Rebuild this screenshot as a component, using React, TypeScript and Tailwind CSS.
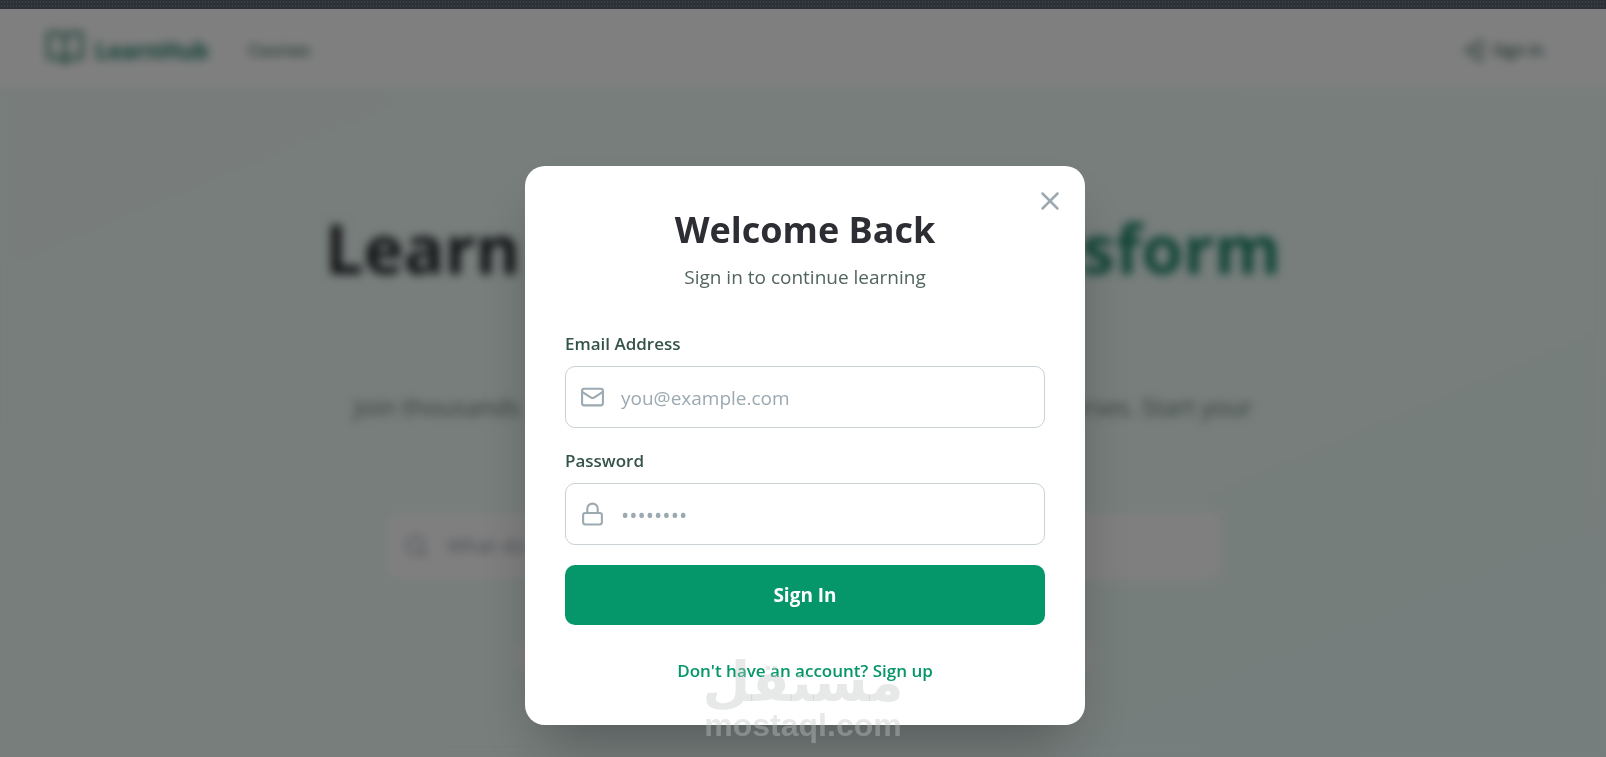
import React, { useState } from "react";
import { BookOpen, Lock, LogIn, Mail, Search, X } from "lucide-react";
import clsx from "clsx";

interface FieldProps {
  id: string;
  label: string;
  type: string;
  placeholder: string;
  icon: React.ReactNode;
}

const Field = ({ id, label, type, placeholder, icon }: FieldProps) => (
  <div>
    <label htmlFor={id} className="block mb-[10px] text-[17px] leading-[25px] font-semibold text-[#365349]">
      {label}
    </label>
    <div className="relative">
      <span className="absolute left-[15px] top-1/2 -translate-y-1/2 text-[#9ca9b1]">{icon}</span>
      <input
        id={id}
        type={type}
        placeholder={placeholder}
        className={clsx(
          "block w-full h-[62px] pl-[55px] pr-4 rounded-[10px] border border-[#c9d1d5] bg-white text-gray-900 placeholder:text-[#9ca9b1] outline-none",
          type === "password" ? "text-[22px]" : "pt-[2px] text-[19px]"
        )}
      />
    </div>
  </div>
);

const Header = () => (
  <header className="flex items-center justify-between h-[78px] pl-[45px] pr-[62px] bg-white">
    <div className="flex items-center gap-10">
      <a href="#" className="flex items-center gap-[10px] text-[#35846e]">
        <BookOpen size={40} />
        <span className="pt-1 text-[23px] font-bold text-[#23816a]">LearnHub</span>
      </a>
      <a href="#courses" className="pt-1 text-base font-semibold text-[#3f7566]">Courses</a>
    </div>
    <button className="flex items-center gap-2 pt-1 text-base font-semibold text-[#3f6a5e]">
      <LogIn size={25} />
      Sign In
    </button>
  </header>
);

const Hero = () => (
  <section className="flex flex-col items-center flex-1 pt-[114px] bg-linear-to-br from-[#f0fbf6] to-[#ecfdfa]">
    <h1 className="flex justify-between w-full max-w-[956px] text-[68px] leading-[94px] font-bold text-[#26282e]">
      <span>Learn</span>
      <span className="text-[#22896c]">Transform</span>
    </h1>
    <p className="flex justify-between w-full max-w-[898px] mt-[90px] text-2xl leading-[44px] text-[#6d827c]">
      <span>Join thousands</span>
      <span>courses. Start your</span>
    </p>
    <label className="flex items-center gap-[18px] w-full max-w-[834px] h-[66px] mt-[84px] px-[18px] rounded-[10px] bg-white text-gray-400">
      <Search size={25} />
      <input
        type="search"
        placeholder="What do you want to learn?"
        className="flex-1 bg-transparent text-xl outline-none placeholder:text-gray-400"
      />
    </label>
    <div className="w-full max-w-[588px] h-[34px] mt-[60px] rounded-full bg-white/60" />
  </section>
);

// Semi-transparent brand stamp that sits over the dialog's lower edge.
const Watermark = () => (
  <div className="absolute inset-x-0 top-[636px] flex flex-col items-center pointer-events-none text-[#c3c6c5]/40">
    <span lang="ar" dir="rtl" className="h-[62px] text-[55px] leading-[74px] font-bold font-['DejaVu_Sans',sans-serif]">
      مستقل
    </span>
    <span className="text-[32px] leading-9 font-bold font-['Liberation_Sans',sans-serif]">mostaql.com</span>
  </div>
);

const SignInDialog = ({ onClose }: { onClose: () => void }) => (
  <div className="absolute inset-0 flex items-start justify-center pt-[157px] pl-6 pr-5 bg-black/50 backdrop-blur-[5px]">
    <div
      role="dialog"
      aria-labelledby="dialog-title"
      className="relative w-full max-w-[560px] p-10 rounded-[20px] bg-white shadow-[0_31px_62px_-15px_rgba(0,0,0,0.3)]"
    >
      <button aria-label="Close" onClick={onClose} className="absolute top-5 right-5 text-[#9ca9b1]">
        <X size={30} />
      </button>
      <div className="mb-10 text-center">
        <h2 id="dialog-title" className="mb-[10px] text-4xl leading-[47px] font-bold text-[#2d2e34]">
          Welcome Back
        </h2>
        <p className="text-[19px] leading-7 text-[#52645f]">Sign in to continue learning</p>
      </div>
      <form className="flex flex-col gap-5" onSubmit={(e) => e.preventDefault()}>
        <Field id="email" label="Email Address" type="email" placeholder="you@example.com" icon={<Mail size={25} />} />
        <Field id="password" label="Password" type="password" placeholder="••••••••" icon={<Lock size={25} />} />
        <button type="submit" className="h-[60px] rounded-[10px] bg-[#059669] text-[19px] font-bold text-white">
          Sign In
        </button>
      </form>
      <div className="mt-8 text-center leading-7">
        <button className="text-[17px] font-semibold text-[#059669]">Don't have an account? Sign up</button>
      </div>
    </div>
  </div>
);

const App = () => {
  const [open, setOpen] = useState(true);
  return (
    <div className="flex flex-col h-screen overflow-hidden font-['Open_Sans','Noto_Sans',sans-serif]">
      <div className="h-[9px] shrink-0 bg-[#2e3037] bg-[radial-gradient(#40494f,transparent_1px)] bg-[length:3px_4px]" />
      <main className="relative flex flex-col flex-1 min-h-0 overflow-hidden">
        <Header />
        <Hero />
        {open && <SignInDialog onClose={() => setOpen(false)} />}
        <Watermark />
      </main>
    </div>
  );
};

export default App;
